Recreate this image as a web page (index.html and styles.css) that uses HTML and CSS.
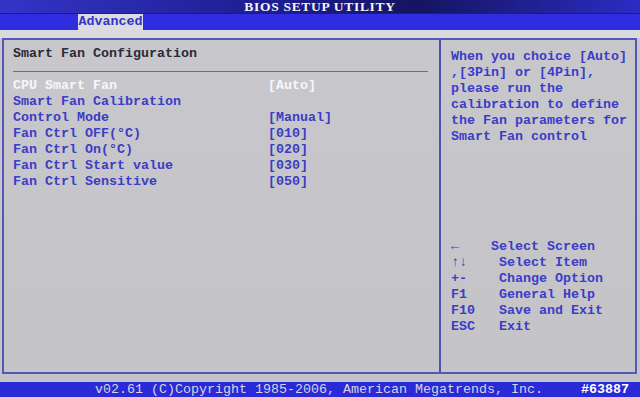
FILE: index.html
```html
<!DOCTYPE html>
<html lang="en">
<head>
    <meta charset="UTF-8">
    <title>BIOS Setup Utility</title>
    <link rel="stylesheet" href="styles.css">
</head>
<body>
    <!-- Title bar -->
    <div class="title-bar">BIOS SETUP UTILITY</div>

    <!-- Tabs -->
    <div class="tab-bar">
        <span class="tab active">Advanced</span>
    </div>

    <!-- Main frame -->
    <div class="screen">
        <div class="frame">
            <div class="left-panel">
                <div class="section-title">Smart Fan Configuration</div>
                <div class="rule"></div>
                <div class="item selected"><span class="label">CPU Smart Fan</span><span class="value">[Auto]</span></div>
                <div class="item"><span class="label">Smart Fan Calibration</span></div>
                <div class="item"><span class="label">Control Mode</span><span class="value">[Manual]</span></div>
                <div class="item"><span class="label">Fan Ctrl OFF(°C)</span><span class="value">[010]</span></div>
                <div class="item"><span class="label">Fan Ctrl On(°C)</span><span class="value">[020]</span></div>
                <div class="item"><span class="label">Fan Ctrl Start value</span><span class="value">[030]</span></div>
                <div class="item"><span class="label">Fan Ctrl Sensitive</span><span class="value">[050]</span></div>
            </div>
            <div class="right-panel">
                <div class="help-text">When you choice [Auto]
,[3Pin] or [4Pin],
please run the
calibration to define
the Fan parameters for
Smart Fan control</div>
                <div class="keys">←    Select Screen
↑↓    Select Item
+-    Change Option
F1    General Help
F10   Save and Exit
ESC   Exit</div>
            </div>
        </div>
    </div>

    <!-- Footer -->
    <div class="footer">
        <span class="copyright">v02.61 (C)Copyright 1985-2006, American Megatrends, Inc.</span>
        <span class="tag">#63887</span>
    </div>
</body>
</html>
```

FILE: styles.css
```css
/* General */
body {
    margin: 0;
    width: 640px;
    height: 397px;
    overflow: hidden;
    background: #c6c6cb;
    font-family: "Liberation Mono", "DejaVu Sans Mono", monospace;
    font-size: 13.33px;
    font-weight: bold;
    line-height: 16px;
    display: flex;
    flex-direction: column;
}

/* Title bar */
.title-bar {
    height: 13px;
    line-height: 13px;
    text-align: center;
    color: #f4f4f8;
    font-family: "Liberation Serif", serif;
    font-size: 13.5px;
    letter-spacing: 0.7px;
    background: linear-gradient(to right, #3434c8, #1c1c8c 45%, #141460 65%, #2c2cc4);
    border-bottom: 1px solid #1a1a90;
}

/* Tabs */
.tab-bar {
    height: 16px;
    background: #2e2ee0;
    padding-left: 78px;
    display: flex;
}

.tab {
    width: 65px;
    line-height: 16px;
    color: #3434c4;
    text-align: center;
}

.tab.active {
    background: #dcdce2;
}

/* Screen area */
.screen {
    flex: 1;
    padding: 8px 3px 8px 2px;
    background: linear-gradient(#dadade 0, #dadade 8px, #c8c8cc 8px, #c4c4c8);
    display: flex;
}

.frame {
    flex: 1;
    display: flex;
    border: 2px solid #5656b6;
}

.left-panel {
    width: 426px;
    padding: 6px 0 0 9px;
    border-right: 2px solid #5050b8;
}

.section-title {
    color: #2a2a38;
}

.rule {
    height: 1px;
    width: 415px;
    background: #6666b8;
    margin: 9px 0 6px 0;
}

.item {
    display: flex;
    color: #3c3cc4;
}

.item .label {
    width: 255px;
}

.item.selected {
    color: #f6f6fa;
}

/* Help panel */
.right-panel {
    flex: 1;
    padding: 9px 0 0 10px;
    color: #3c3cc8;
}

.help-text,
.keys {
    white-space: pre;
}

.keys {
    margin-top: 94px;
}

/* Footer */
.footer {
    height: 15px;
    line-height: 15px;
    background: #2a2ad8;
    color: #d4d4e4;
    font-weight: normal;
    display: flex;
    padding-left: 95px;
}

.copyright {
    width: 486px;
}

.tag {
    color: #ffffff;
    font-weight: bold;
}
```
